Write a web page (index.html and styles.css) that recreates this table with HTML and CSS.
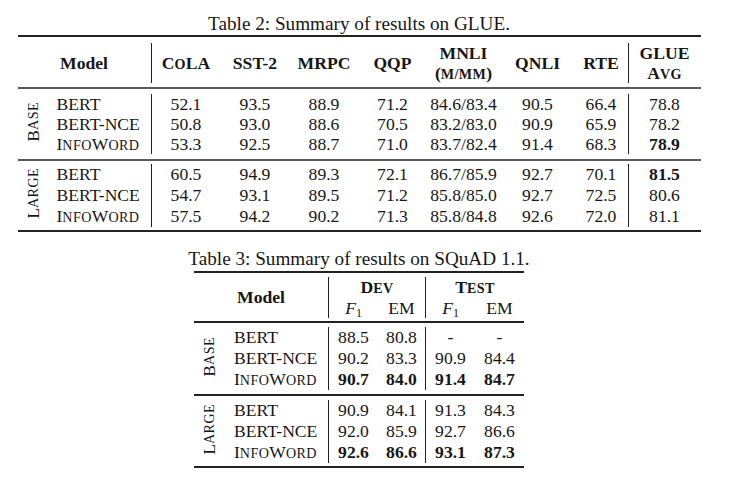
FILE: index.html
```html
<!DOCTYPE html>
<html lang="en">
<head>
<meta charset="utf-8">
<title>Summary of results</title>
<link rel="stylesheet" href="styles.css">
</head>
<body>
<div class="page">
  <p class="caption caption-2">Table 2: Summary of results on GLUE.</p>
  <table class="tbl glue">
    <colgroup>
      <col class="g-grp"><col class="g-model"><col class="g-c69"><col class="g-c69"><col class="g-c69">
      <col class="g-c68"><col class="g-c74"><col class="g-c74"><col class="g-c54"><col class="g-c72">
    </colgroup>
    <thead>
      <tr class="sp sp-h1"><td colspan="10"></td></tr>
      <tr class="head">
        <th colspan="2" class="vr">Model</th>
        <th>C<span class="sc">o</span>LA</th>
        <th>SST-2</th>
        <th>MRPC</th>
        <th>QQP</th>
        <th>MNLI<br>(<span class="sc">m/mm</span>)</th>
        <th>QNLI</th>
        <th class="vr">RTE</th>
        <th>GLUE<br>A<span class="sc">vg</span></th>
      </tr>
      <tr class="sp sp-h2"><td colspan="10"></td></tr>
    </thead>
    <tbody class="grp1">
      <tr class="sp rule sp-a"><td class="label" rowspan="5"><span class="rot">B<span class="sc">ase</span></span></td><td colspan="9"></td></tr>
      <tr><td class="model vr">BERT</td><td>52.1</td><td>93.5</td><td>88.9</td><td>71.2</td><td>84.6/83.4</td><td>90.5</td><td class="vr">66.4</td><td>78.8</td></tr>
      <tr><td class="model vr">BERT-NCE</td><td>50.8</td><td>93.0</td><td>88.6</td><td>70.5</td><td>83.2/83.0</td><td>90.9</td><td class="vr">65.9</td><td>78.2</td></tr>
      <tr><td class="model vr">I<span class="sc">nfo</span>W<span class="sc">ord</span></td><td>53.3</td><td>92.5</td><td>88.7</td><td>71.0</td><td>83.7/82.4</td><td>91.4</td><td class="vr">68.3</td><td><b>78.9</b></td></tr>
      <tr class="sp sp-b"><td colspan="9"></td></tr>
    </tbody>
    <tbody class="grp2">
      <tr class="sp rule sp-c"><td class="label" rowspan="5"><span class="rot">L<span class="sc">arge</span></span></td><td colspan="9"></td></tr>
      <tr><td class="model vr">BERT</td><td>60.5</td><td>94.9</td><td>89.3</td><td>72.1</td><td>86.7/85.9</td><td>92.7</td><td class="vr">70.1</td><td><b>81.5</b></td></tr>
      <tr><td class="model vr">BERT-NCE</td><td>54.7</td><td>93.1</td><td>89.5</td><td>71.2</td><td>85.8/85.0</td><td>92.7</td><td class="vr">72.5</td><td>80.6</td></tr>
      <tr><td class="model vr">I<span class="sc">nfo</span>W<span class="sc">ord</span></td><td>57.5</td><td>94.2</td><td>90.2</td><td>71.3</td><td>85.8/84.8</td><td>92.6</td><td class="vr">72.0</td><td>81.1</td></tr>
      <tr class="sp sp-d"><td colspan="9"></td></tr>
    </tbody>
  </table>

  <p class="caption caption-3">Table 3: Summary of results on SQuAD 1.1.</p>
  <table class="tbl squad">
    <colgroup>
      <col class="s-grp"><col class="s-model"><col class="s-c49"><col class="s-c48"><col class="s-c49"><col class="s-c49">
    </colgroup>
    <thead>
      <tr class="sp sp-h1"><td colspan="6"></td></tr>
      <tr class="head">
        <th colspan="2" rowspan="2" class="vr">Model</th>
        <th colspan="2" class="vr">D<span class="sc">ev</span></th>
        <th colspan="2">T<span class="sc">est</span></th>
      </tr>
      <tr class="head sub">
        <th><i>F</i><sub>1</sub></th><th class="vr">EM</th><th><i>F</i><sub>1</sub></th><th>EM</th>
      </tr>
      <tr class="sp sp-h2"><td colspan="6"></td></tr>
    </thead>
    <tbody class="grp1">
      <tr class="sp rule sp-a"><td class="label" rowspan="5"><span class="rot">B<span class="sc">ase</span></span></td><td colspan="5"></td></tr>
      <tr><td class="model vr">BERT</td><td>88.5</td><td class="vr">80.8</td><td>-</td><td>-</td></tr>
      <tr><td class="model vr">BERT-NCE</td><td>90.2</td><td class="vr">83.3</td><td>90.9</td><td>84.4</td></tr>
      <tr><td class="model vr">I<span class="sc">nfo</span>W<span class="sc">ord</span></td><td><b>90.7</b></td><td class="vr"><b>84.0</b></td><td><b>91.4</b></td><td><b>84.7</b></td></tr>
      <tr class="sp sp-b"><td colspan="5"></td></tr>
    </tbody>
    <tbody class="grp2">
      <tr class="sp rule sp-c"><td class="label" rowspan="5"><span class="rot">L<span class="sc">arge</span></span></td><td colspan="5"></td></tr>
      <tr><td class="model vr">BERT</td><td>90.9</td><td class="vr">84.1</td><td>91.3</td><td>84.3</td></tr>
      <tr><td class="model vr">BERT-NCE</td><td>92.0</td><td class="vr">85.9</td><td>92.7</td><td>86.6</td></tr>
      <tr><td class="model vr">I<span class="sc">nfo</span>W<span class="sc">ord</span></td><td><b>92.6</b></td><td class="vr"><b>86.6</b></td><td><b>93.1</b></td><td><b>87.3</b></td></tr>
      <tr class="sp sp-d"><td colspan="5"></td></tr>
    </tbody>
  </table>
</div>
</body>
</html>
```

FILE: styles.css
```css
html, body {
  margin: 0;
  background: #ffffff;
}

body {
  color: #161616;
  font-family: "Liberation Serif", "Times New Roman", serif;
  font-size: 17.6px;
}

.page {
  width: 718px;
  padding-top: 14px;
  display: flex;
  flex-direction: column;
  align-items: center;
}

.caption {
  margin: 0;
  font-size: 19.2px;
  line-height: 20px;
  white-space: nowrap;
}

.caption-2 {
  margin-bottom: 1px;
}

.caption-3 {
  margin-top: 16.5px;
  margin-bottom: 2.5px;
}

.sc {
  text-transform: uppercase;
  font-size: 0.8em;
  letter-spacing: 0.03em;
  line-height: 0;
}

.tbl {
  border-collapse: separate;
  border-spacing: 0;
  table-layout: fixed;
  border-top: 2px solid #222;
  border-bottom: 2px solid #222;
}

.tbl td,
.tbl th {
  padding: 0;
  text-align: center;
  vertical-align: middle;
  white-space: nowrap;
  font-weight: normal;
}

.tbl th {
  font-weight: bold;
  line-height: 20px;
}

.tbl b {
  font-weight: bold;
}

.tbl .sp td {
  height: 0;
  padding: 0;
  line-height: 0;
  font-size: 0;
}

.tbl .sp td.label {
  padding: 0;
  font-size: 17.6px;
  line-height: 20px;
}

.tbl .vr {
  border-right: 1px solid #222;
}

.tbl td.model {
  text-align: left;
}

.rot {
  display: inline-block;
  writing-mode: vertical-rl;
  transform: rotate(180deg);
  line-height: 20px;
}

/* GLUE table */
.glue {
  width: 683px;
}

.glue .g-grp { width: 31px; }
.glue .g-model { width: 103px; }
.glue .g-c69 { width: 69px; }
.glue .g-c68 { width: 68px; }
.glue .g-c74 { width: 74px; }
.glue .g-c54 { width: 54px; }
.glue .g-c72 { width: 72px; }

.glue td.model { padding-left: 8px; }

.glue .grp1 td { line-height: 20px; }
.glue .grp2 td { line-height: 21px; }

.glue .rule td { border-top: 2px solid #5a5a5a; }

.glue .sp-h1 td { padding-top: 6px; }
.glue .sp-h2 td { padding-top: 4px; }
.glue .sp-a td { padding-top: 5px; }
.glue .sp-b td { padding-top: 5px; }
.glue .sp-c td { padding-top: 3px; }
.glue .sp-d td { padding-top: 3px; }

/* SQuAD table */
.squad {
  width: 330px;
}

.squad .s-grp { width: 29px; }
.squad .s-model { width: 106px; }
.squad .s-c49 { width: 49px; }
.squad .s-c48 { width: 48px; }

.squad td.model { padding-left: 11px; }

.squad td { line-height: 21px; }

.squad .head th { line-height: 21px; }
.squad .sub th {
  font-weight: normal;
  line-height: 20px;
}

.squad sub {
  font-size: 12px;
  line-height: 0;
  vertical-align: -3px;
}

.squad .rule td { border-top: 2px solid #222; }

.squad .sp-h1 td { padding-top: 4px; }
.squad .sp-h2 td { padding-top: 3px; }
.squad .sp-a td { padding-top: 4px; }
.squad .sp-b td { padding-top: 4px; }
.squad .sp-c td { padding-top: 4px; }
.squad .sp-d td { padding-top: 3px; }
```
